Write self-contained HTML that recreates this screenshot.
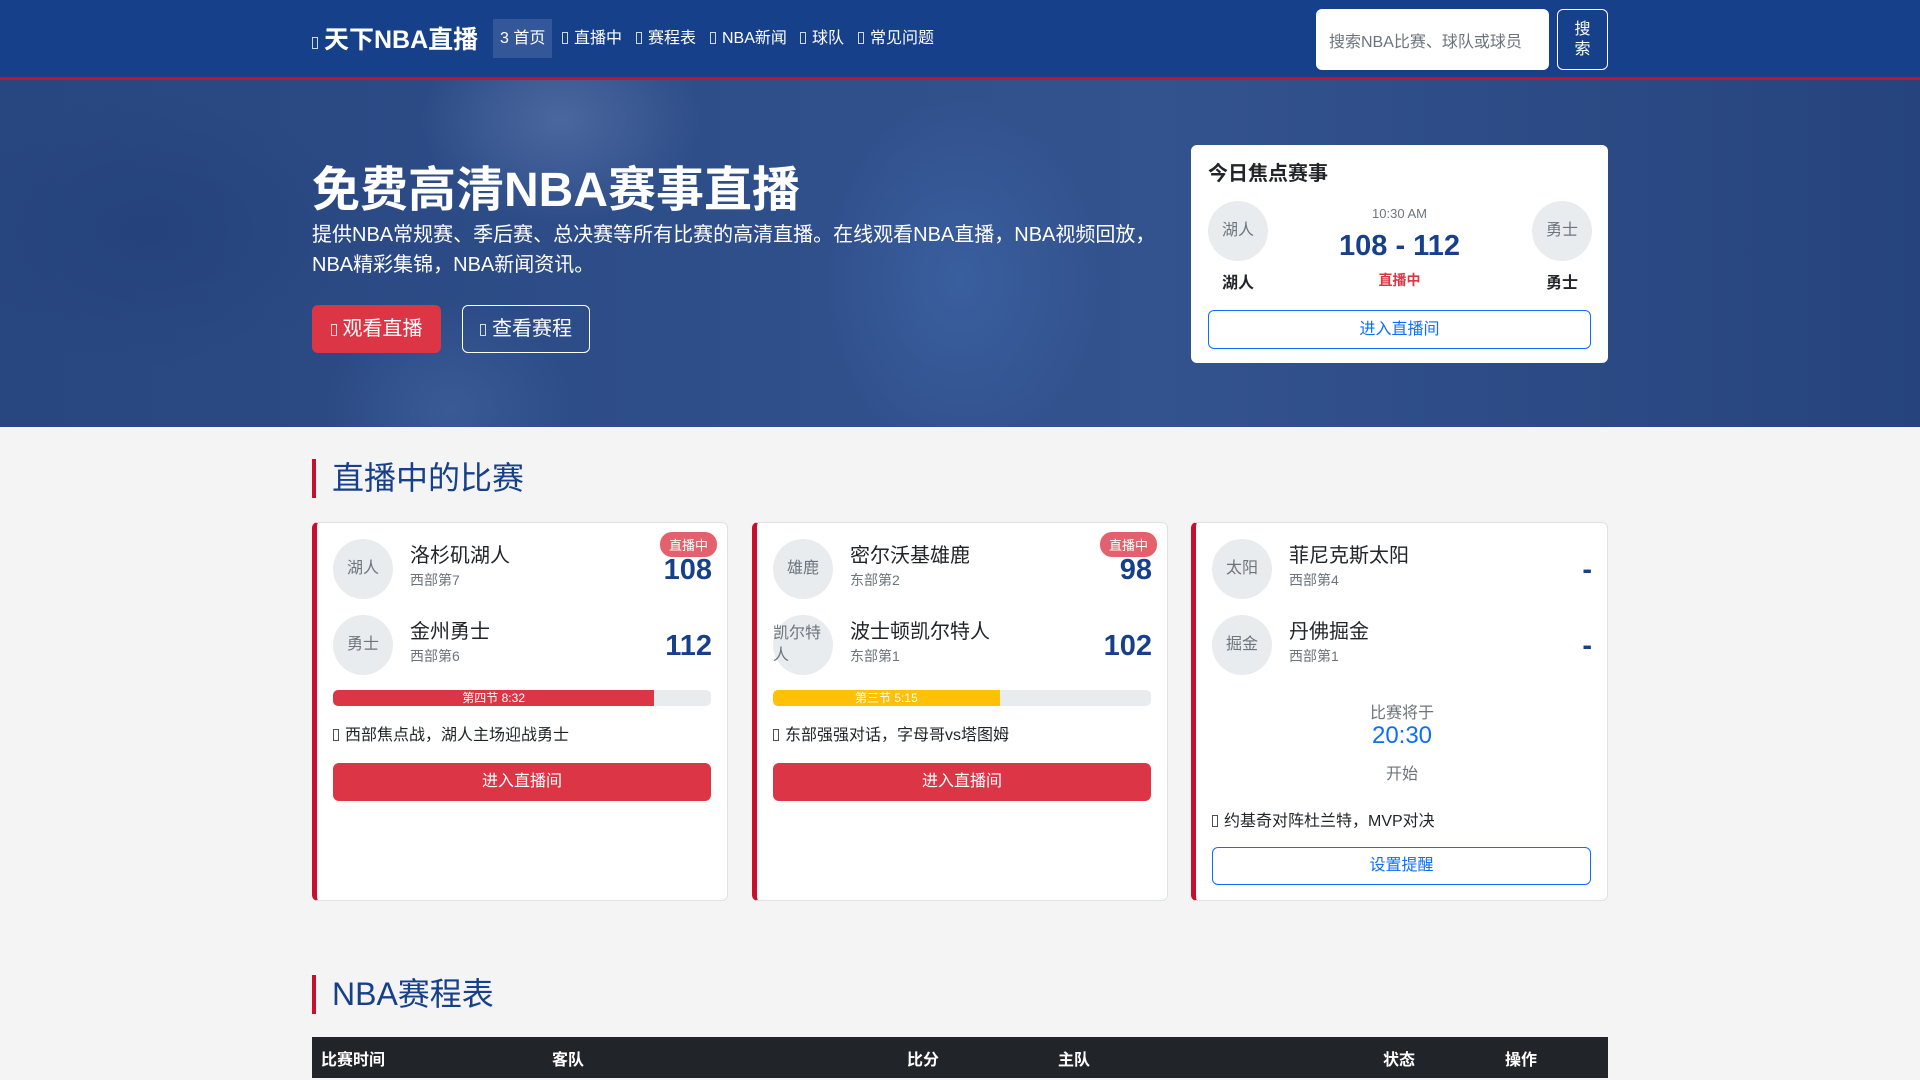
<!DOCTYPE html>
<html><head><meta charset="utf-8"><style>
*{box-sizing:border-box;margin:0;padding:0}
body{width:1920px;height:1080px;overflow:hidden;background:#f4f4f5;font-family:"Liberation Sans","Noto Sans CJK SC",sans-serif;color:#212529}
.tofu{display:inline-block;width:6px;height:12px;border:1px solid currentColor;vertical-align:-1px;margin-right:6px;opacity:.8}
nav{position:absolute;left:0;top:0;width:1920px;height:80px;background:#17408b;border-bottom:3px solid #c8102e}
.brand{position:absolute;left:312px;top:20px;color:#fff;font-size:25px;font-weight:bold}
.nl{position:absolute;top:19px;height:39px;line-height:39px;color:#fff;font-size:16px;padding:0 7px}
.nl.act{background:rgba(255,255,255,.12)}
.search{position:absolute;left:1316px;top:9px;width:233px;height:61px;background:#fff;border-radius:6px;font-size:16px;color:#6c757d;padding:19px 13px}
.sbtn{position:absolute;left:1557px;top:9px;width:51px;height:61px;border:1px solid #fff;border-radius:6px;color:#fff;font-size:16px;text-align:center;line-height:20px;padding-top:10px}
.hero{position:absolute;left:0;top:80px;width:1920px;height:347px;overflow:hidden;
background:radial-gradient(ellipse 200px 260px at 960px 200px,#3a5f9e 0%,transparent 70%),radial-gradient(ellipse 200px 150px at 560px 40px,#4b679f,transparent 70%),radial-gradient(ellipse 180px 160px at 450px 330px,#3a5a96,transparent 70%),radial-gradient(ellipse 300px 200px at 150px 150px,#25427c,transparent 70%),linear-gradient(90deg,#28467f 0%,#2f4f8b 40%,#33538f 60%,#26437d 100%)}
.hero h1{position:absolute;left:312px;top:70px;color:#fff;font-size:48px;font-weight:bold}
.hero p{position:absolute;left:312px;top:140px;width:850px;color:#fff;font-size:20px;line-height:30px}
.b1{position:absolute;left:312px;top:225px;width:129px;height:48px;background:#dc3545;border-radius:6px;color:#fff;font-size:20px;line-height:48px;text-align:center}
.b2{position:absolute;left:462px;top:225px;width:128px;height:48px;border:1px solid #fff;border-radius:6px;color:#fff;font-size:20px;line-height:46px;text-align:center}
.focus{position:absolute;left:1191px;width:417px;height:218px;background:#fff;border-radius:6px}
.focus h5{position:absolute;left:17px;top:12px;font-size:20px;font-weight:bold}
.circ{position:absolute;width:60px;height:60px;border-radius:50%;background:#e9ecef;color:#6c757d;font-size:16px;text-align:center;line-height:60px}
.fb{position:absolute;left:17px;top:165px;width:383px;height:39px;border:1px solid #0d6efd;border-radius:6px;color:#0d6efd;text-align:center;line-height:37px;font-size:16px}
h2{position:absolute;left:312px;font-size:32px;font-weight:normal;color:#17408b;border-left:4px solid #c8102e;padding-left:16px;line-height:39px}
.card{position:absolute;top:522px;width:416px;height:379px;background:#fff;border:1px solid #dee2e6;border-left:5px solid #c8102e;border-radius:6px}
.card .circ{left:16px}
.tn{position:absolute;left:93px;font-size:20px;color:#212529}
.rk{position:absolute;left:93px;font-size:14px;color:#6c757d}
.sc{position:absolute;right:15px;font-size:29px;font-weight:bold;color:#17408b}
.badge{position:absolute;right:10px;top:9px;background:#e4606d;color:#fff;font-size:13px;padding:3px 9px;border-radius:12px}
.bar{position:absolute;left:16px;top:167px;width:378px;height:16px;background:#e9ecef;border-radius:5px;overflow:hidden}
.bar div{height:16px;color:#fff;font-size:12px;text-align:center;line-height:16px}
.note{position:absolute;left:16px;top:198px;font-size:16px}
.cb{position:absolute;left:16px;top:240px;width:378px;height:38px;background:#dc3545;color:#fff;border-radius:6px;text-align:center;line-height:38px;font-size:16px}
table{position:absolute;left:312px;top:1037px;width:1296px;border-collapse:collapse;background:#212529;color:#fff;font-size:16px;font-weight:bold}
</style></head><body>
<nav>
<div class="brand"><span class="tofu"></span>天下NBA直播</div>
<div class="nl act" style="left:493px">3 首页</div>
<div class="nl" style="left:555px"><span class="tofu"></span>直播中</div>
<div class="nl" style="left:629px"><span class="tofu"></span>赛程表</div>
<div class="nl" style="left:703px"><span class="tofu"></span>NBA新闻</div>
<div class="nl" style="left:793px"><span class="tofu"></span>球队</div>
<div class="nl" style="left:851px"><span class="tofu"></span>常见问题</div>
<div class="search">搜索NBA比赛、球队或球员</div>
<div class="sbtn">搜<br>索</div>
</nav>
<div class="hero">
<h1>免费高清NBA赛事直播</h1>
<p>提供NBA常规赛、季后赛、总决赛等所有比赛的高清直播。在线观看NBA直播，NBA视频回放，NBA精彩集锦，NBA新闻资讯。</p>
<div class="b1"><span class="tofu"></span>观看直播</div>
<div class="b2"><span class="tofu"></span>查看赛程</div>
<div class="focus" style="top:65px">
<h5>今日焦点赛事</h5>
<div class="circ" style="left:17px;top:56px">湖人</div>
<div class="circ" style="left:341px;top:56px">勇士</div>
<div style="position:absolute;left:17px;width:60px;top:124px;text-align:center;font-weight:bold;font-size:16px">湖人</div>
<div style="position:absolute;left:341px;width:60px;top:124px;text-align:center;font-weight:bold;font-size:16px">勇士</div>
<div style="position:absolute;left:0;width:417px;top:61px;text-align:center;font-size:13px;color:#6c757d">10:30 AM</div>
<div style="position:absolute;left:0;width:417px;top:85px;text-align:center;font-size:29px;font-weight:bold;color:#17408b">108 - 112</div>
<div style="position:absolute;left:0;width:417px;top:125px;text-align:center;font-size:14px;font-weight:bold;color:#dc3545">直播中</div>
<div class="fb">进入直播间</div>
</div>
</div>
<h2 style="top:459px">直播中的比赛</h2>
<div class="card" style="left:312px">
<div class="badge">直播中</div>
<div class="circ" style="top:16px">湖人</div><div class="tn" style="top:16px">洛杉矶湖人</div><div class="rk" style="top:47px">西部第7</div><div class="sc" style="top:31px">108</div>
<div class="circ" style="top:92px">勇士</div><div class="tn" style="top:92px">金州勇士</div><div class="rk" style="top:123px">西部第6</div><div class="sc" style="top:107px">112</div>
<div class="bar"><div style="width:85%;background:#dc3545">第四节 8:32</div></div>
<div class="note"><span class="tofu"></span>西部焦点战，湖人主场迎战勇士</div>
<div class="cb">进入直播间</div>
</div>
<div class="card" style="left:752px">
<div class="badge">直播中</div>
<div class="circ" style="top:16px">雄鹿</div><div class="tn" style="top:16px">密尔沃基雄鹿</div><div class="rk" style="top:47px">东部第2</div><div class="sc" style="top:31px">98</div>
<div class="circ" style="top:92px;line-height:22px;padding-top:8px;text-align:left">凯尔特人</div><div class="tn" style="top:92px">波士顿凯尔特人</div><div class="rk" style="top:123px">东部第1</div><div class="sc" style="top:107px">102</div>
<div class="bar"><div style="width:60%;background:#ffc107">第三节 5:15</div></div>
<div class="note"><span class="tofu"></span>东部强强对话，字母哥vs塔图姆</div>
<div class="cb">进入直播间</div>
</div>
<div class="card" style="left:1191px;width:417px">
<div class="circ" style="top:16px">太阳</div><div class="tn" style="top:16px">菲尼克斯太阳</div><div class="rk" style="top:47px">西部第4</div><div class="sc" style="top:31px">-</div>
<div class="circ" style="top:92px">掘金</div><div class="tn" style="top:92px">丹佛掘金</div><div class="rk" style="top:123px">西部第1</div><div class="sc" style="top:107px">-</div>
<div style="position:absolute;left:0;width:412px;top:176px;text-align:center;font-size:16px;color:#6c757d">比赛将于</div>
<div style="position:absolute;left:0;width:412px;top:199px;text-align:center;font-size:24px;color:#0d6efd">20:30</div>
<div style="position:absolute;left:0;width:412px;top:237px;text-align:center;font-size:16px;color:#6c757d">开始</div>
<div class="note" style="top:284px"><span class="tofu"></span>约基奇对阵杜兰特，MVP对决</div>
<div style="position:absolute;left:16px;top:324px;width:379px;height:38px;border:1px solid #0d6efd;border-radius:6px;color:#0d6efd;text-align:center;line-height:36px;font-size:16px">设置提醒</div>
</div>
<h2 style="top:975px">NBA赛程表</h2>
<table><tr style="height:41px">
<td style="width:240px;padding-left:9px">比赛时间</td><td style="width:355px">客队</td><td style="width:151px">比分</td><td style="width:325px">主队</td><td style="width:122px">状态</td><td>操作</td>
</tr></table>
</body></html>
